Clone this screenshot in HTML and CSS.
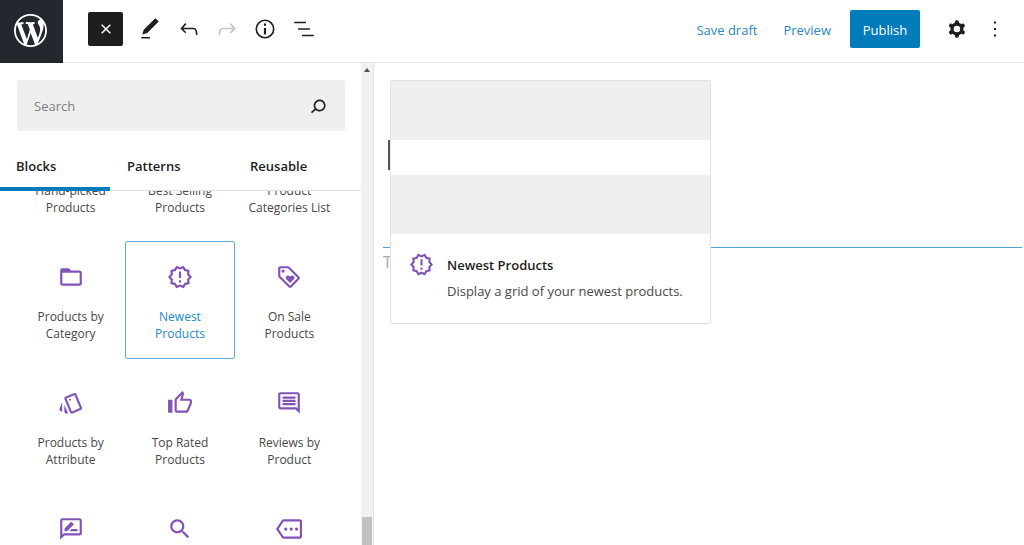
FILE: index.html
```html
<!DOCTYPE html>
<html lang="en">
<head>
<meta charset="utf-8">
<meta name="viewport" content="width=device-width, initial-scale=1">
<title>Add New Page</title>
<link rel="stylesheet" href="styles.css">
</head>
<body>
<div class="editor">
  <header class="header">
    <a class="logo" href="#" aria-label="View pages">
      <svg viewBox="0 0 20 20"><path d="M20 10c0-5.51-4.49-10-10-10C4.48 0 0 4.49 0 10c0 5.52 4.48 10 10 10 5.51 0 10-4.48 10-10zM7.78 15.37L4.37 6.22c.55-.02 1.17-.08 1.17-.08.5-.06.44-1.13-.06-1.11 0 0-1.45.11-2.37.11-.18 0-.37 0-.58-.01C4.12 2.69 6.87 1.11 10 1.11c2.33 0 4.45.87 6.05 2.34-.68-.11-1.65.39-1.65 1.58 0 .74.45 1.36.9 2.1.35.61.55 1.36.55 2.46 0 1.49-1.4 5-1.4 5l-3.03-8.37c.54-.02.82-.17.82-.17.5-.05.44-1.25-.06-1.22 0 0-1.44.12-2.38.12-.87 0-2.33-.12-2.33-.12-.5-.03-.56 1.2-.06 1.22l.92.08 1.26 3.41zM17.41 10c.24-.64.74-1.87.43-4.25.7 1.29 1.05 2.71 1.05 4.25 0 3.29-1.73 6.24-4.4 7.78.97-2.59 1.94-5.2 2.92-7.78zM6.1 18.09C3.12 16.65 1.11 13.53 1.11 10c0-1.3.23-2.48.72-3.59C3.25 10.3 4.67 14.2 6.1 18.09zm4.03-6.63l2.58 6.98c-.86.29-1.76.45-2.71.45-.79 0-1.57-.11-2.29-.33.81-2.38 1.62-4.74 2.42-7.1z"/></svg>
    </a>
    <button class="inserter" type="button" aria-label="Close block inserter">
      <svg viewBox="0 0 10 10"><path d="M.7.7l8.6 8.6M9.3.7L.7 9.3"/></svg>
    </button>
    <div class="tools">
      <button class="tool" type="button" aria-label="Tools"><svg viewBox="0 0 24 24"><path d="M20.1 5.1L16.9 2 6.2 12.7l-1.3 4.4 4.5-1.3L20.1 5.1zM4 20.8h8v-1.5H4v1.5z"/></svg></button>
      <button class="tool" type="button" aria-label="Undo"><svg viewBox="0 0 24 24"><path d="M18.3 11.7c-.6-.6-1.4-.9-2.3-.9H6.7l2.9-3.3-1.1-1-4.5 5L8.5 16l1-1-2.7-2.7H16c.5 0 .9.2 1.3.5 1 1 1 3.4 1 4.5v.3h1.5v-.2c0-1.5 0-4.3-1.5-5.7z"/></svg></button>
      <button class="tool tool-off" type="button" aria-label="Redo" disabled><svg viewBox="0 0 24 24"><path d="M15.6 6.5l-1.1 1 2.9 3.3H8c-.9 0-1.7.3-2.3.9-1.4 1.5-1.4 4.2-1.4 5.6v.2h1.5v-.3c0-1.1 0-3.5 1-4.5.3-.3.7-.5 1.3-.5h9.2L14.5 15l1.1 1.1 4.6-4.6-4.6-5z"/></svg></button>
      <button class="tool" type="button" aria-label="Details"><svg viewBox="0 0 24 24"><path fill-rule="evenodd" d="M12 3.2a8.8 8.8 0 1 0 0 17.6 8.8 8.8 0 0 0 0-17.6zm0 16.1a7.3 7.3 0 1 1 0-14.6 7.3 7.3 0 0 1 0 14.6zM11 17h2v-6h-2v6zm0-8h2V7h-2v2z"/></svg></button>
      <button class="tool" type="button" aria-label="List view"><svg viewBox="0 0 24 24"><path d="M13.8 5.2H3v1.5h10.8V5.2zm-3.6 12v1.5H21v-1.5H10.2zm7.2-6H6.6v1.5h10.8v-1.5z"/></svg></button>
    </div>
    <div class="actions">
      <button class="text-button" type="button">Save draft</button>
      <button class="text-button" type="button">Preview</button>
      <button class="publish" type="button">Publish</button>
      <button class="tool" type="button" aria-label="Settings"><svg viewBox="0 0 24 24"><path fill-rule="evenodd" d="M10.289 4.836A1 1 0 0111.275 4h1.306a1 1 0 01.987.836l.244 1.466c.787.26 1.503.679 2.108 1.218l1.393-.522a1 1 0 011.216.437l.653 1.13a1 1 0 01-.23 1.273l-1.148.944a6.025 6.025 0 010 2.435l1.149.946a1 1 0 01.23 1.272l-.653 1.13a1 1 0 01-1.216.437l-1.394-.522c-.605.54-1.32.958-2.108 1.218l-.244 1.466a1 1 0 01-.987.836h-1.306a1 1 0 01-.986-.836l-.244-1.466a5.995 5.995 0 01-2.108-1.218l-1.394.522a1 1 0 01-1.217-.436l-.653-1.131a1 1 0 01.23-1.272l1.149-.946a6.026 6.026 0 010-2.435l-1.148-.944a1 1 0 01-.23-1.272l.653-1.131a1 1 0 011.217-.437l1.393.522a5.994 5.994 0 012.108-1.218l.244-1.466zM14.929 12a3 3 0 11-6 0 3 3 0 016 0z"/></svg></button>
      <button class="tool" type="button" aria-label="Options"><svg viewBox="0 0 24 24"><path d="M13 19h-2v-2h2v2zm0-6h-2v-2h2v2zm0-6h-2V5h2v2z"/></svg></button>
    </div>
  </header>

  <div class="body">
    <aside class="sidebar">
      <div class="panel">
        <div class="search">
          <input class="search-input" type="search" placeholder="Search" aria-label="Search for a block">
          <svg class="search-icon" viewBox="0 0 24 24"><path d="M13.5 6C10.5 6 8 8.5 8 11.5c0 1.1.3 2.1.9 3l-3.4 3 1 1.1 3.4-2.9c1 .9 2.2 1.4 3.6 1.4 3 0 5.5-2.5 5.5-5.5C19 8.5 16.5 6 13.5 6zm0 9.5c-2.2 0-4-1.8-4-4s1.8-4 4-4 4 1.8 4 4-1.8 4-4 4z"/></svg>
        </div>
        <div class="tabs" role="tablist">
          <button class="tab tab-active" type="button" role="tab" aria-selected="true">Blocks</button>
          <button class="tab" type="button" role="tab" aria-selected="false">Patterns</button>
          <button class="tab" type="button" role="tab" aria-selected="false">Reusable</button>
        </div>
        <div class="blocks-view">
          <div class="blocks">
            <button class="block block-text" type="button"><span>Hand-picked Products</span></button>
            <button class="block block-text" type="button"><span>Best Selling Products</span></button>
            <button class="block block-text" type="button"><span>Product Categories List</span></button>
            <button class="block" type="button"><svg viewBox="0 0 24 24"><path d="M20 6h-8l-2-2H4c-1.1 0-1.99.9-1.99 2L2 18c0 1.1.9 2 2 2h16c1.1 0 2-.9 2-2V8c0-1.1-.9-2-2-2zm0 12H4V8h16v10z"/></svg><span>Products by Category</span></button>
            <button class="block block-active" type="button"><svg viewBox="0 0 24 24"><path d="M23 12l-2.44-2.78.34-3.68-3.61-.82-1.89-3.18L12 3 8.6 1.54 6.71 4.72l-3.61.81.34 3.68L1 12l2.44 2.78-.34 3.69 3.61.82 1.89 3.18L12 21l3.4 1.46 1.89-3.18 3.61-.82-.34-3.68L23 12zm-4.51 2.11l.26 2.79-2.74.62-1.43 2.41L12 18.82l-2.58 1.11-1.43-2.41-2.74-.62.26-2.8L3.66 12l1.85-2.12-.26-2.78 2.74-.61 1.43-2.41L12 5.18l2.58-1.11 1.43 2.41 2.74.62-.26 2.79L20.34 12l-1.85 2.11zM11 15h2v2h-2zm0-8h2v6h-2z"/></svg><span>Newest Products</span></button>
            <button class="block" type="button"><svg viewBox="0 0 24 24"><path d="M21.41 11.58l-9-9C12.05 2.22 11.55 2 11 2H4c-1.1 0-2 .9-2 2v7c0 .55.22 1.05.59 1.42l9 9c.36.36.86.58 1.41.58s1.05-.22 1.41-.59l7-7c.37-.36.59-.86.59-1.41s-.23-1.06-.59-1.42zM13 20.01L4 11V4h7v-.01l9 9-7 7.02z"/><circle cx="6.5" cy="6.5" r="1.5"/><path d="M8.9 12.55c0 .57.23 1.07.6 1.45l3.5 3.5 3.5-3.5c.37-.37.6-.89.6-1.45 0-1.13-.92-2.05-2.05-2.05-.57 0-1.08.23-1.45.6l-.6.6-.6-.59c-.37-.38-.89-.61-1.45-.61-1.13 0-2.05.92-2.05 2.05z"/></svg><span>On Sale Products</span></button>
            <button class="block" type="button"><svg viewBox="0 0 24 24"><path d="M2.53 19.65l1.34.56v-9.03l-2.43 5.86c-.41 1.02.08 2.19 1.09 2.61zm19.5-3.7L17.07 3.98c-.31-.75-1.04-1.21-1.81-1.23-.26 0-.53.04-.79.15L7.1 5.95c-.75.31-1.21 1.03-1.23 1.8-.01.27.04.54.15.8l4.96 11.97c.31.76 1.05 1.22 1.83 1.23.26 0 .52-.05.77-.15l7.36-3.05c1.02-.42 1.51-1.59 1.09-2.6zm-9.2 3.8L7.87 7.79l7.35-3.04h.01l4.95 11.95-7.35 3.05z"/><circle cx="11" cy="9" r="1"/><path d="M5.88 19.75c0 1.1.9 2 2 2h1.45l-3.45-8.34v6.34z"/></svg><span>Products by Attribute</span></button>
            <button class="block" type="button"><svg viewBox="0 0 24 24"><path d="M9 21h9c.83 0 1.54-.5 1.84-1.22l3.02-7.05c.09-.23.14-.47.14-.73v-2c0-1.1-.9-2-2-2h-6.31l.95-4.57.03-.32c0-.41-.17-.79-.44-1.06L14.17 1 7.58 7.59C7.22 7.95 7 8.45 7 9v10c0 1.1.9 2 2 2zM9 9l4.34-4.34L12 10h9v2l-3 7H9V9zM1 9h4v12H1z"/></svg><span>Top Rated Products</span></button>
            <button class="block" type="button"><svg viewBox="0 0 24 24"><path d="M21.99 4c0-1.1-.89-2-1.99-2H4c-1.1 0-2 .9-2 2v12c0 1.1.9 2 2 2h14l4 4-.01-18zM20 4v13.17L18.83 16H4V4h16zM6 12h12v2H6zm0-3h12v2H6zm0-3h12v2H6z"/></svg><span>Reviews by Product</span></button>
            <button class="block" type="button" aria-label="Reviews by Category"><svg viewBox="0 0 24 24"><path d="M20 2H4c-1.1 0-2 .9-2 2v18l4-4h14c1.1 0 2-.9 2-2V4c0-1.1-.9-2-2-2zm0 14H5.17l-.59.59-.58.58V4h16v12zm-9.5-2H18v-2h-5.5zm3.86-5.87c.2-.2.2-.51 0-.71l-1.77-1.77c-.2-.2-.51-.2-.71 0L6 11.53V14h2.47l5.89-5.87z"/></svg></button>
            <button class="block" type="button" aria-label="Product Search"><svg viewBox="0 0 24 24"><path d="M15.5 14h-.79l-.28-.27C15.41 12.59 16 11.11 16 9.5 16 5.91 13.09 3 9.5 3S3 5.91 3 9.5 5.91 16 9.5 16c1.61 0 3.09-.59 4.23-1.57l.27.28v.79l5 4.99L20.49 19l-4.99-5zm-6 0C7.01 14 5 11.99 5 9.5S7.01 5 9.5 5 14 7.01 14 9.5 11.99 14 9.5 14z"/></svg></button>
            <button class="block" type="button" aria-label="Products by Tag"><svg viewBox="0 0 24 24"><path d="M22 3H7c-.69 0-1.23.35-1.59.88L0 12l5.41 8.11c.36.53.9.89 1.59.89h15c1.1 0 2-.9 2-2V5c0-1.1-.9-2-2-2zm0 16H7.07L2.4 12l4.66-7H22v14z"/><circle cx="9" cy="12" r="1.5"/><circle cx="14" cy="12" r="1.5"/><circle cx="19" cy="12" r="1.5"/></svg></button>
          </div>
        </div>
      </div>
      <div class="scrollbar" aria-hidden="true">
        <svg class="scroll-up" viewBox="0 0 6 4"><path d="M3 0l3 4H0z"/></svg>
        <div class="scroll-thumb"></div>
      </div>
    </aside>

    <main class="canvas">
      <div class="title-line"><span class="caret"></span></div>
      <div class="insertion"></div>
      <p class="paragraph">T</p>
      <section class="preview">
        <div class="preview-area">
          <div class="preview-block"></div>
          <div class="preview-block"></div>
        </div>
        <div class="preview-card">
          <svg viewBox="0 0 24 24"><path d="M23 12l-2.44-2.78.34-3.68-3.61-.82-1.89-3.18L12 3 8.6 1.54 6.71 4.72l-3.61.81.34 3.68L1 12l2.44 2.78-.34 3.69 3.61.82 1.89 3.18L12 21l3.4 1.46 1.89-3.18 3.61-.82-.34-3.68L23 12zm-4.51 2.11l.26 2.79-2.74.62-1.43 2.41L12 18.82l-2.58 1.11-1.43-2.41-2.74-.62.26-2.8L3.66 12l1.85-2.12-.26-2.78 2.74-.61 1.43-2.41L12 5.18l2.58-1.11 1.43 2.41 2.74.62-.26 2.79L20.34 12l-1.85 2.11zM11 15h2v2h-2zm0-8h2v6h-2z"/></svg>
          <div class="preview-text">
            <h2 class="preview-title">Newest Products</h2>
            <p class="preview-desc">Display a grid of your newest products.</p>
          </div>
        </div>
      </section>
    </main>
  </div>
</div>
</body>
</html>
```
FILE: styles.css
```css
* {
  box-sizing: border-box;
}

body {
  margin: 0;
  background: #fff;
  color: #1e1e1e;
  font-family: "Segoe UI", "Open Sans", "Noto Sans", sans-serif;
  font-size: 13px;
}

button {
  margin: 0;
  padding: 0;
  border: 0;
  background: none;
  color: inherit;
  font: inherit;
}

svg {
  display: block;
  flex: none;
  fill: currentColor;
}

.editor {
  display: flex;
  flex-direction: column;
  height: 100vh;
  overflow: hidden;
}

/* Top bar */
.header {
  display: flex;
  flex: none;
  align-items: center;
  height: 63px;
  padding-bottom: 4px;
  border-bottom: 1px solid #e6e6e6;
}

.logo {
  display: flex;
  align-items: center;
  justify-content: center;
  align-self: flex-start;
  width: 63px;
  height: 63px;
  padding: 0 2px 2px 0;
  background: #23282e;
  color: #fff;
}

.logo svg {
  width: 33px;
  height: 33px;
}

.inserter {
  display: flex;
  align-items: center;
  justify-content: center;
  width: 35px;
  height: 34px;
  margin-left: 25px;
  border-radius: 2px;
  background: #1e1e1e;
}

.inserter svg {
  width: 10px;
  height: 10px;
  stroke: #fff;
  stroke-width: 1.5;
}

.tools {
  display: flex;
  width: 192px;
  margin-left: 8px;
}

.tool {
  display: flex;
  flex: 1;
  align-items: center;
  justify-content: center;
  height: 38px;
}

.tool svg {
  width: 26px;
  height: 26px;
}

.tool-off {
  color: #c4c4c4;
}

.actions {
  display: flex;
  align-items: center;
  margin-left: auto;
  padding-right: 10px;
}

.actions .tool {
  flex: none;
  width: 38px;
}

.actions .publish + .tool {
  margin-left: 18px;
}

.text-button {
  height: 38px;
  padding-top: 2px;
  margin-right: 26px;
  color: #2a86bd;
}

.text-button + .publish {
  margin-left: -7px;
}

.publish {
  width: 70px;
  height: 38px;
  padding-top: 2px;
  border-radius: 2px;
  background: #007cba;
  color: #fff;
}

.body {
  display: flex;
  flex: 1;
  min-height: 0;
}

/* Block inserter */
.sidebar {
  display: flex;
  flex: none;
  width: 374px;
  border-right: 1px solid #e6e6e6;
}

.panel {
  display: flex;
  flex: 1;
  flex-direction: column;
  min-width: 0;
}

.search {
  display: flex;
  flex: none;
  align-items: center;
  height: 51px;
  margin: 17px 16px 0 17px;
  padding: 0 14px 0 17px;
  border-radius: 2px;
  background: #efefef;
}

.search-input {
  flex: 1;
  min-width: 0;
  padding: 0;
  border: 0;
  outline: 0;
  background: none;
  font: inherit;
  line-height: 20px;
}

.search-input::placeholder {
  color: #808080;
  opacity: 1;
}

.search-icon {
  width: 26px;
  height: 26px;
}

.tabs {
  display: grid;
  flex: none;
  grid-template-columns: 111px 123px 1fr;
  height: 60px;
  border-bottom: 1px solid #e2e2e2;
}

.tab {
  padding: 10px 16px 0;
  font-weight: 600;
  text-align: left;
}

.tab-active {
  margin: 0 1px -1px 0;
  border-bottom: 4px solid #007cba;
  padding-top: 13px;
}

.blocks-view {
  flex: 1;
  min-height: 0;
  overflow: hidden;
}

/* Scrolled position of the block list */
.blocks {
  display: grid;
  grid-template-columns: repeat(3, 1fr);
  grid-auto-rows: 118px;
  row-gap: 8px;
  margin: -76px 17px 0 16px;
}

.block {
  display: flex;
  flex-direction: column;
  align-items: center;
  justify-content: flex-start;
  gap: 18px;
  padding: 22px 12px 16px;
  border: 1px solid transparent;
  border-radius: 2px;
  color: #484848;
  font-size: 12px;
  line-height: 17px;
  text-align: center;
}

.block svg {
  width: 26px;
  height: 26px;
  color: #8053b5;
}

.block-text {
  justify-content: flex-end;
}

.block-active {
  border-color: #5facd8;
  color: #2389c2;
}

.scrollbar {
  display: flex;
  flex: none;
  flex-direction: column;
  justify-content: space-between;
  align-items: center;
  width: 12px;
  padding-top: 5px;
  background: #f1f1f1;
}

.scroll-up {
  width: 6px;
  height: 4px;
  color: #505050;
}

.scroll-thumb {
  width: 10px;
  height: 28px;
  background: #c1c1c1;
}

/* Canvas */
.canvas {
  position: relative;
  flex: 1;
  min-width: 0;
  padding: 77px 2px 0 9px;
}

.title-line {
  display: flex;
  height: 107px;
  padding-left: 5px;
}

.caret {
  width: 3px;
  height: 30px;
  background: #555;
}

.insertion {
  height: 1px;
  background: #4fa3d1;
}

.paragraph {
  margin: 2px 0 0;
  color: #a8a8a8;
  font-size: 16px;
  line-height: 24px;
}

/* Hover preview popover */
.preview {
  position: absolute;
  top: 17px;
  left: 16px;
  width: 321px;
  border: 1px solid #e2e2e2;
  border-radius: 2px;
  background: #fff;
}

.preview-area {
  display: grid;
  gap: 35px;
}

.preview-block {
  height: 59px;
  background: #efefef;
}

.preview-card {
  display: flex;
  gap: 13px;
  padding: 18px 18px 19px;
}

.preview-card svg {
  width: 25px;
  height: 25px;
  color: #8053b5;
}

.preview-title {
  margin: 0;
  font-size: 13px;
  font-weight: 600;
  line-height: 27px;
}

.preview-desc {
  margin: 0;
  color: #484848;
  line-height: 25px;
}
```
